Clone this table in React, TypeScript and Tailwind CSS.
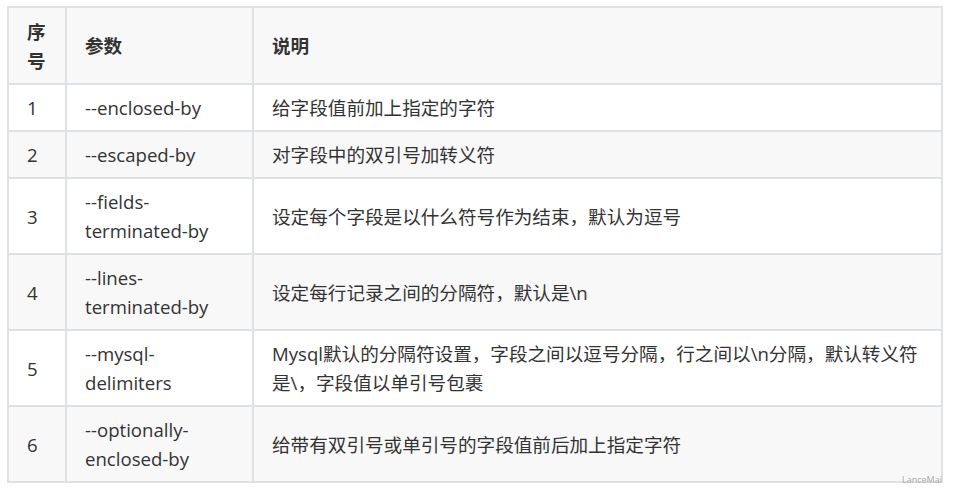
const rows = [
  { id: '1', param: '--enclosed-by', desc: '给字段值前加上指定的字符' },
  { id: '2', param: '--escaped-by', desc: '对字段中的双引号加转义符' },
  { id: '3', param: '--fields-terminated-by', desc: '设定每个字段是以什么符号作为结束，默认为逗号' },
  { id: '4', param: '--lines-terminated-by', desc: '设定每行记录之间的分隔符，默认是\\n' },
  {
    id: '5',
    param: '--mysql-delimiters',
    desc: 'Mysql默认的分隔符设置，字段之间以逗号分隔，行之间以\\n分隔，默认转义符是\\，字段值以单引号包裹',
  },
  { id: '6', param: '--optionally-enclosed-by', desc: '给带有双引号或单引号的字段值前后加上指定字符' },
]

export default function App() {
  return (
    <div
      className="relative min-h-[492px] w-[953px] bg-white pl-[7px] pt-[6px] text-[18.6px] text-[#333333]"
      style={{ fontFamily: '"Open Sans", "Noto Sans CJK SC", sans-serif' }}
    >
      <table className="w-[936px] table-fixed border-collapse leading-[29px]">
        <colgroup>
          <col className="w-[58px]" />
          <col className="w-[187px]" />
          <col />
        </colgroup>
        <thead>
          <tr className="bg-[#f8f8f8] font-bold">
            <th className="h-[77px] border-2 border-[#dfe2e5] px-[18px] text-left align-middle">序号</th>
            <th className="border-2 border-[#dfe2e5] px-[18px] text-left align-middle">参数</th>
            <th className="border-2 border-[#dfe2e5] px-[18px] text-left align-middle">说明</th>
          </tr>
        </thead>
        <tbody>
          {rows.map((r, i) => (
            <tr key={r.id} className={i % 2 === 1 ? 'bg-[#f8f8f8]' : 'bg-white'}>
              <td className="border-2 border-[#dfe2e5] px-[18px] py-[8px] align-middle">{r.id}</td>
              <td className="border-2 border-[#dfe2e5] px-[18px] py-[8px] align-middle">{r.param}</td>
              <td className="border-2 border-[#dfe2e5] px-[18px] py-[8px] align-middle">{r.desc}</td>
            </tr>
          ))}
        </tbody>
      </table>
      <span className="absolute left-[902px] top-[474px] text-[9px] leading-[12px] text-[#aaaaaa]">LanceMai</span>
    </div>
  )
}
